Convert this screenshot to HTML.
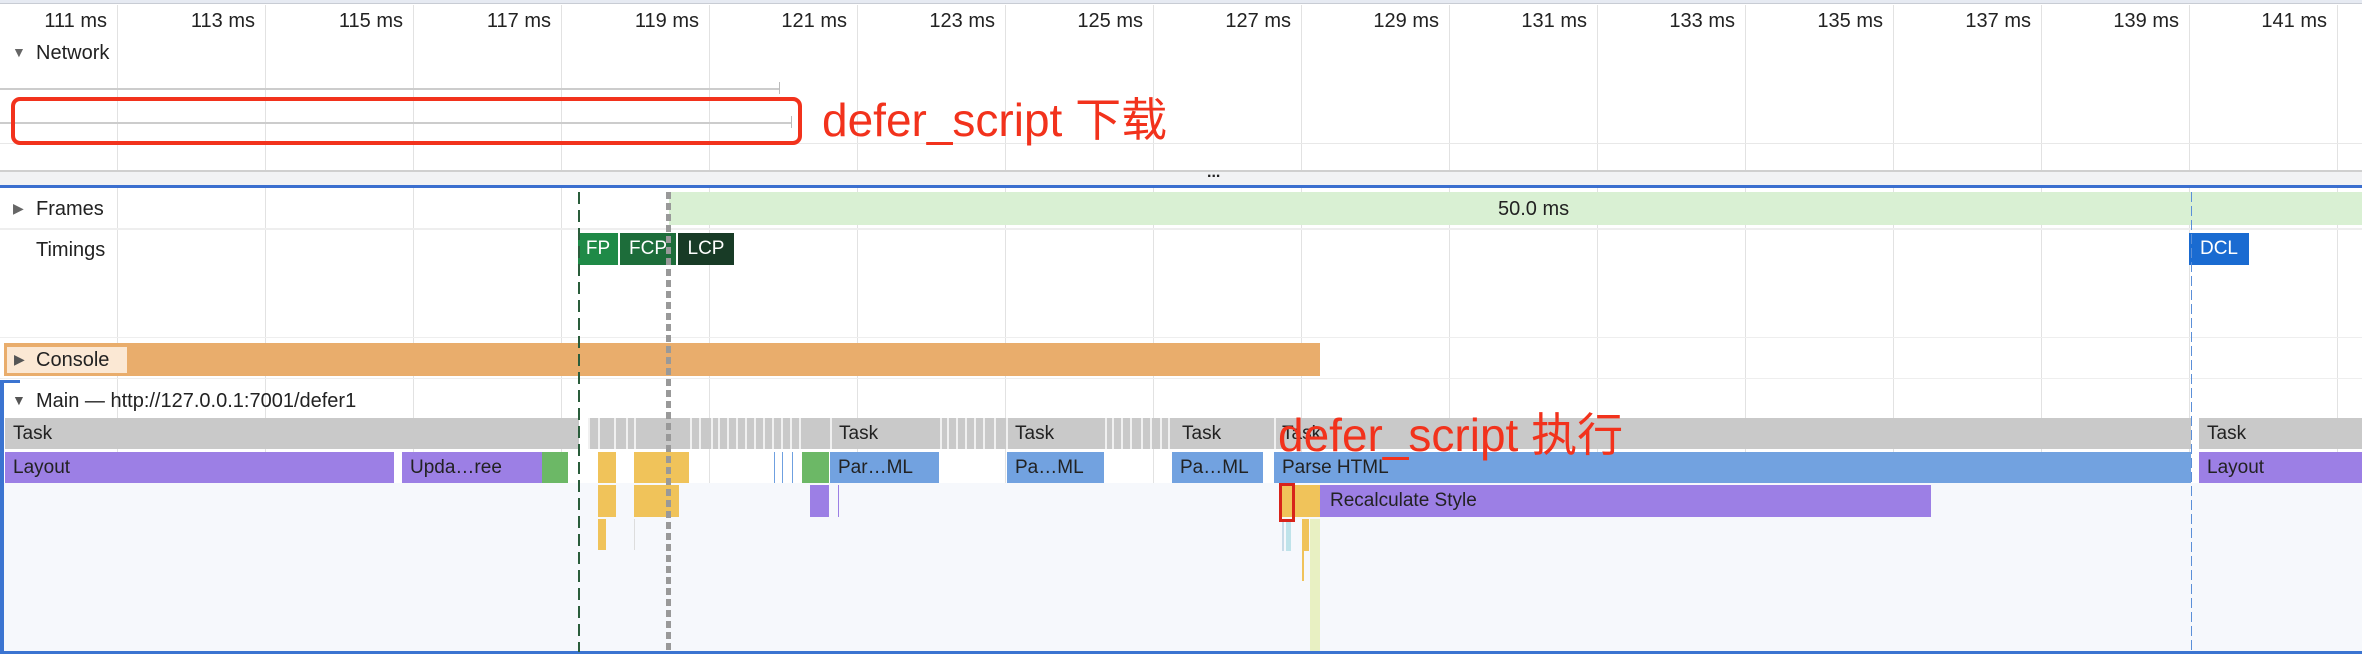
<!DOCTYPE html>
<html><head><meta charset="utf-8"><style>
*{margin:0;padding:0;box-sizing:border-box}
body{width:2362px;height:654px;overflow:hidden;background:#fff;position:relative;font-family:"Liberation Sans","DejaVu Sans",sans-serif;color:#222}
div,span{position:absolute}
.t{font-size:20px;white-space:nowrap;line-height:1}
.g{width:1px;background:#e2e2e2}
.b{height:31px;font-size:19px;line-height:31px;padding-left:8px;white-space:nowrap;overflow:hidden;color:#222}
.r{color:#f2321c;font-family:"Liberation Sans","Noto Sans CJK SC",sans-serif;font-size:46px;white-space:nowrap;line-height:1}
.w{width:2px;background:#f0f0f0;top:418px;height:31px}
</style></head><body>
<div style="left:0;top:0;width:2362px;height:4px;background:#e6eaf2;border-bottom:1px solid #c8ccd4"></div>
<div id="grid"></div>
<script>
var h='';
for(var k=0;k<16;k++){var x=117+148*k;h+='<div class="g" style="left:'+x+'px;top:5px;height:647px"></div>';
h+='<div class="t" style="left:'+(x-88)+'px;top:11px;width:78px;text-align:right">'+(111+2*k)+' ms</div>';}
document.getElementById('grid').outerHTML=h;
</script>
<div class="t" style="left:12px;top:45px;font-size:14px;color:#666">▼</div>
<div class="t" style="left:36px;top:43px">Network</div>
<div style="left:0;top:88px;width:780px;height:2px;background:#ccc"></div>
<div style="left:779px;top:82px;width:1px;height:12px;background:#bbb"></div>
<div style="left:0;top:122px;width:792px;height:2px;background:#ccc"></div>
<div style="left:791px;top:116px;width:1px;height:12px;background:#bbb"></div>
<div style="left:0;top:143px;width:2362px;height:1px;background:#e8e8e8"></div>
<div style="left:11px;top:97px;width:791px;height:48px;border:4px solid #f2321c;border-radius:9px"></div>
<div class="r" style="left:822px;top:97px">defer_script 下载</div>
<div style="left:0;top:170px;width:2362px;height:16px;background:#f1f2f4;border-top:2px solid #cfcfcf"></div>
<div class="t" style="left:1207px;top:165px;font-size:16px;font-weight:bold">...</div>
<div style="left:0;top:185px;width:2362px;height:3px;background:#3b6fcf"></div>
<div style="left:669px;top:192px;width:1693px;height:33px;background:#d9f0d3"></div>
<div class="t" style="left:1498px;top:199px">50.0 ms</div>
<div class="t" style="left:13px;top:201px;font-size:14px;color:#666">▶</div>
<div class="t" style="left:36px;top:199px">Frames</div>
<div style="left:0;top:228px;width:2362px;height:2px;background:#eee"></div>
<div class="t" style="left:36px;top:240px">Timings</div>
<div style="left:578px;top:233px;width:40px;height:32px;background:#1f8a47;color:#fff;font-size:19px;line-height:32px;text-align:center">FP</div>
<div style="left:620px;top:233px;width:56px;height:32px;background:#1d6d3a;color:#fff;font-size:19px;line-height:32px;text-align:center">FCP</div>
<div style="left:678px;top:233px;width:56px;height:32px;background:#183b26;color:#fff;font-size:19px;line-height:32px;text-align:center">LCP</div>
<div style="left:2189px;top:233px;width:60px;height:32px;background:#1a6bd1;color:#fff;font-size:19px;line-height:32px;text-align:center">DCL</div>
<div style="left:0;top:337px;width:2362px;height:1px;background:#eee"></div>
<div style="left:4px;top:343px;width:1316px;height:33px;background:#e9ad6c"></div>
<div style="left:7px;top:347px;width:120px;height:26px;background:#fbe8d4"></div>
<div class="t" style="left:14px;top:352px;font-size:14px;color:#555">▶</div>
<div class="t" style="left:36px;top:350px">Console</div>
<div style="left:0;top:378px;width:2362px;height:1px;background:#eee"></div>
<div style="left:0;top:483px;width:2362px;height:169px;background:#f6f8fc"></div>
<div style="left:0;top:380px;width:4px;height:274px;background:#3b74d1"></div>
<div style="left:0;top:380px;width:20px;height:3px;background:#3b74d1"></div>
<div style="left:0;top:651px;width:2362px;height:3px;background:#3b74d1"></div>
<div class="t" style="left:12px;top:393px;font-size:14px;color:#555">▼</div>
<div class="t" style="left:36px;top:391px">Main — http://127.0.0.1:7001/defer1</div>
<div class="b" style="left:5px;top:418px;width:574px;background:#c9c9c9">Task</div>
<div class="b" style="left:588px;top:418px;width:1603px;background:#c9c9c9"></div>
<div class="b" style="left:2199px;top:418px;width:163px;background:#c9c9c9">Task</div>
<div id="ws"></div>
<script>
var xs=[588,598,614,626,634,690,699,711,718,727,736,745,754,763,772,781,790,799,830,940,947,956,965,974,983,994,1006,1105,1112,1121,1130,1141,1150,1160,1168,1274];
var s='';xs.forEach(function(x){s+='<div class="w" style="left:'+x+'px"></div>'});
document.getElementById('ws').outerHTML=s;
</script>
<div class="b" style="left:831px;top:418px;width:100px;background:transparent">Task</div>
<div class="b" style="left:1007px;top:418px;width:100px;background:transparent">Task</div>
<div class="b" style="left:1174px;top:418px;width:100px;background:transparent">Task</div>
<div class="b" style="left:1274px;top:418px;width:100px;background:transparent">Task</div>
<div class="b" style="left:5px;top:452px;width:389px;background:#9c7fe5">Layout</div>
<div class="b" style="left:402px;top:452px;width:140px;background:#9c7fe5">Upda…ree</div>
<div style="left:542px;top:452px;width:26px;height:31px;background:#6cb866"></div>
<div style="left:598px;top:452px;width:18px;height:31px;background:#f0c35a"></div>
<div style="left:634px;top:452px;width:55px;height:31px;background:#f0c35a"></div>
<div style="left:774px;top:452px;width:1px;height:31px;background:#6fa0e0"></div>
<div style="left:782px;top:452px;width:1px;height:31px;background:#6fa0e0"></div>
<div style="left:792px;top:452px;width:1px;height:31px;background:#6fa0e0"></div>
<div style="left:802px;top:452px;width:27px;height:31px;background:#6cb866"></div>
<div class="b" style="left:830px;top:452px;width:109px;background:#72a2e0">Par…ML</div>
<div class="b" style="left:1007px;top:452px;width:97px;background:#72a2e0">Pa…ML</div>
<div class="b" style="left:1172px;top:452px;width:91px;background:#72a2e0">Pa…ML</div>
<div class="b" style="left:1274px;top:452px;width:917px;background:#72a2e0">Parse HTML</div>
<div class="b" style="left:2199px;top:452px;width:163px;background:#9c7fe5">Layout</div>
<div style="left:598px;top:485px;width:18px;height:32px;background:#f0c35a"></div>
<div style="left:634px;top:485px;width:45px;height:32px;background:#f0c35a"></div>
<div style="left:810px;top:485px;width:19px;height:32px;background:#9c7fe5"></div>
<div style="left:838px;top:485px;width:1px;height:32px;background:#9c7fe5"></div>
<div style="left:1282px;top:485px;width:38px;height:32px;background:#f0c35a"></div>
<div class="b" style="left:1320px;top:485px;width:611px;height:32px;line-height:32px;background:#9c7fe5;padding-left:10px">Recalculate Style</div>
<div style="left:598px;top:519px;width:8px;height:31px;background:#f0c35a"></div>
<div style="left:634px;top:519px;width:1px;height:31px;background:#ddd"></div>
<div style="left:1282px;top:519px;width:2px;height:32px;background:#c8dbe8"></div>
<div style="left:1286px;top:519px;width:5px;height:32px;background:#bfe3ea"></div>
<div style="left:1302px;top:519px;width:7px;height:32px;background:#f0c35a"></div>
<div style="left:1302px;top:551px;width:2px;height:30px;background:#f0c35a"></div>
<div style="left:1310px;top:519px;width:10px;height:132px;background:#e8f0c2"></div>
<div style="left:1279px;top:483px;width:16px;height:39px;border:3px solid #d8231a"></div>
<div style="left:578px;top:192px;width:2px;height:460px;background:repeating-linear-gradient(#2a5d3b 0 12px,transparent 12px 18px)"></div>
<div style="left:666px;top:192px;width:5px;height:460px;background:repeating-linear-gradient(#999 0 7px,transparent 7px 11px)"></div>
<div style="left:2191px;top:192px;width:1px;height:460px;background:repeating-linear-gradient(#5b8fd8 0 10px,transparent 10px 14px)"></div>
<div class="r" style="left:1278px;top:412px">defer_script 执行</div>
</body></html>
